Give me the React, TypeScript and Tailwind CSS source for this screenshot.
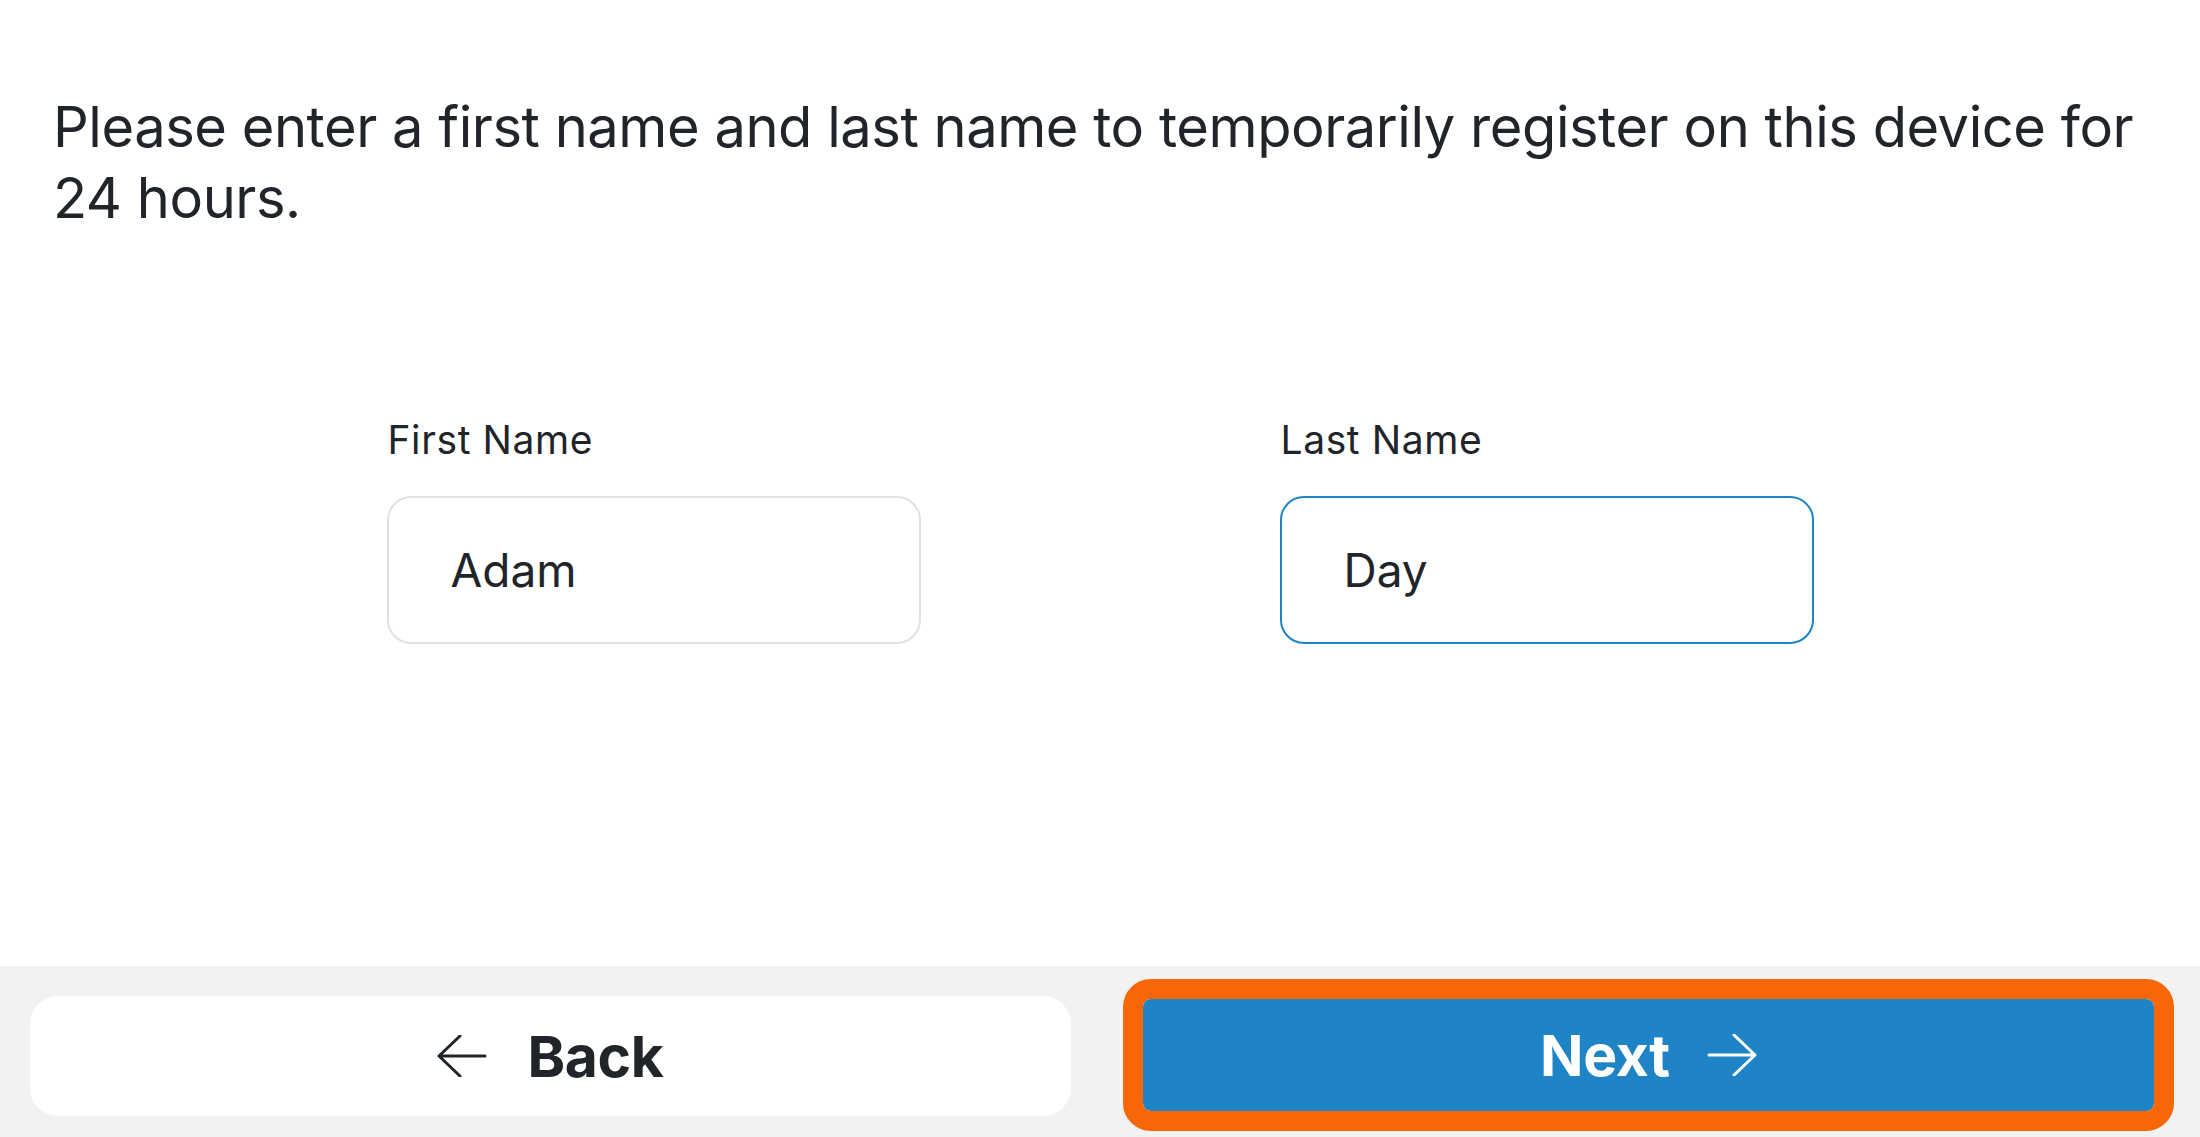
import React, { useState } from 'react';

const ArrowLeft: React.FC<{ className?: string }> = ({ className }) => (
  <svg viewBox="0 0 50 42" className={className} fill="none" stroke="currentColor" strokeWidth={3} strokeLinecap="round" strokeLinejoin="round">
    <path d="M48 21H2M23 1L2 21l21 20" />
  </svg>
);

const ArrowRight: React.FC<{ className?: string }> = ({ className }) => (
  <svg viewBox="0 0 50 42" className={className} fill="none" stroke="currentColor" strokeWidth={3} strokeLinecap="round" strokeLinejoin="round">
    <path d="M2 21h46M27 1l21 20-21 20" />
  </svg>
);

const App: React.FC = () => {
  const [firstName, setFirstName] = useState('Adam');
  const [lastName, setLastName] = useState('Day');

  return (
    <div className="h-[1137px] w-full flex flex-col bg-white text-[#212529] font-['Inter','Noto_Sans',sans-serif]">
      <div className="flex-1 px-[53px] pt-[92px]">
        <p className="text-[56px] leading-[71px] tracking-[-0.45px]">
          Please enter a first name and last name to temporarily register on this device for 24 hours.
        </p>

        <div className="mt-[183px] flex justify-center gap-[359px]">
          <div className="flex flex-col">
            <label htmlFor="firstName" className="text-[39px] leading-[46px] tracking-[0.6px] pl-px">First Name</label>
            <input
              id="firstName"
              value={firstName}
              onChange={e => setFirstName(e.target.value)}
              className="mt-[33px] w-[534px] h-[148px] rounded-[24px] border-2 border-[#e1e1e1] bg-white px-[62px] text-[46px] text-[#212529] outline-none"
            />
          </div>
          <div className="flex flex-col">
            <label htmlFor="lastName" className="text-[39px] leading-[46px] tracking-[0.6px] pl-px">Last Name</label>
            <input
              id="lastName"
              value={lastName}
              onChange={e => setLastName(e.target.value)}
              className="mt-[33px] w-[534px] h-[148px] rounded-[24px] border-2 border-[#1e84c6] bg-white px-[62px] text-[46px] text-[#212529] outline-none"
            />
          </div>
        </div>
      </div>

      <div className="h-[171px] bg-[#f2f2f2] flex items-start pl-[30px] pt-[30px]">
        <button type="button" className="w-[1041px] h-[120px] rounded-[28px] bg-white flex items-center justify-center gap-[40px] text-[#212529]">
          <ArrowLeft className="w-[50px] h-[42px]" />
          <span className="text-[57px] font-bold tracking-[-0.3px] leading-none">Back</span>
        </button>
        <button type="button" className="ml-[72px] mt-[3px] w-[1011px] h-[112px] rounded-[8px] bg-[#1e84c6] outline-[20px] outline-solid outline-[#f76707] flex items-center justify-center gap-[37px] text-white">
          <span className="text-[57px] font-bold tracking-[-0.3px] leading-none">Next</span>
          <ArrowRight className="w-[50px] h-[42px]" />
        </button>
      </div>
    </div>
  );
};

export default App;
